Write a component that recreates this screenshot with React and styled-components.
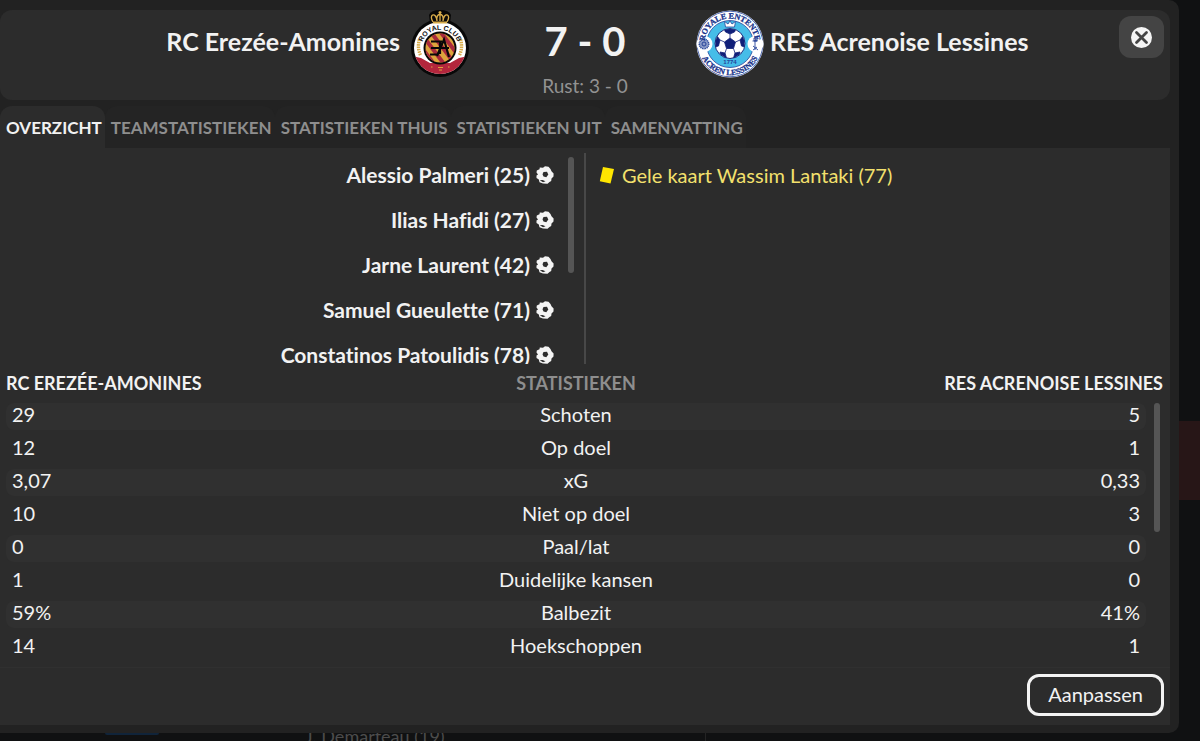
import styled, { createGlobalStyle } from "styled-components";

const goals = [
  "Alessio Palmeri (25)",
  "Ilias Hafidi (27)",
  "Jarne Laurent (42)",
  "Samuel Gueulette (71)",
  "Constatinos Patoulidis (78)",
];

const tabs = ["Overzicht", "Teamstatistieken", "Statistieken thuis", "Statistieken uit", "Samenvatting"];

const stats = [
  ["29", "Schoten", "5"],
  ["12", "Op doel", "1"],
  ["3,07", "xG", "0,33"],
  ["10", "Niet op doel", "3"],
  ["0", "Paal/lat", "0"],
  ["1", "Duidelijke kansen", "0"],
  ["59%", "Balbezit", "41%"],
  ["14", "Hoekschoppen", "1"],
];

const HomeCrest = () => (
  <Crest viewBox="0 0 68 68" aria-hidden="true">
    <defs>
      <path id="home-arc" d="M15.5 42 A18.8 18.8 0 1 1 52.5 42" />
      <clipPath id="home-ring"><circle cx="34" cy="38" r="26" /></clipPath>
      <clipPath id="home-core"><circle cx="34" cy="38" r="14.5" /></clipPath>
    </defs>
    <circle cx="34" cy="38" r="29" fill="#080808" />
    <path d="M24 14 L23 5 Q25 0 34 0 Q43 0 45 5 L44 14 Z" fill="#080808" />
    <g clipPath="url(#home-ring)">
      <rect width="68" height="68" fill="#fff" />
      <path d="M6 46 L15 48 L24 53 H44 L53 48 L62 46 V68 H6 Z" fill="#b3263c" />
    </g>
    <g fill="none" stroke="#d9ad4b" strokeWidth="1.3">
      <path d="M27 12 Q24 7 26.500 5 Q30 4 31 11 M41 12 Q44 7 41.500 5 Q38 4 37 11 M34 11 V3 M31 11 Q30 5 34 4 Q38 5 37 11" />
      <path d="M27 12.500 H41" strokeWidth="2" />
      <path d="M32.500 2.500 H35.500 M34 1 V4" />
      <path d="M14.500 45 Q11 38 13.500 29 M53.500 45 Q57 38 54.500 29" strokeWidth="3.400" strokeDasharray="1.600 .8" />
    </g>
    <circle cx="34" cy="38" r="16.500" fill="#080808" />
    <g clipPath="url(#home-core)">
      <rect x="18" y="22" width="32" height="32" fill="#dda43c" />
      <path d="M17 26 L41 58 M24 21 L49 54 M33 20 L55 49 M13 34 L31 58" stroke="#a92a3c" strokeWidth="4" />
    </g>
    <path d="M25 31.500 H36 M25 38 H43 M24 44.500 H31 M31 46 L38 29.500 L43 47 M34 31 V44" fill="none" stroke="#080808" strokeWidth="2.200" />
    <path d="M32 57.500 h5 M25 57 h1.500 M42 57 h1.500 M33 60 h3" stroke="#dda43c" strokeWidth="1" />
    <CrestText $size={7} fill="#111"><textPath href="#home-arc" startOffset="50%" textAnchor="middle">ROYAL CLUB</textPath></CrestText>
  </Crest>
);

const AwayCrest = () => (
  <Crest viewBox="0 0 68 68" aria-hidden="true">
    <defs>
      <path id="away-top" d="M10.9 44.8 A25.5 25.5 0 1 1 57.1 44.8" />
      <path id="away-bottom" d="M3.500 28.6 A31 31 0 1 0 64.500 28.6" />
      <clipPath id="away-ball"><circle cx="34" cy="33.500" r="14.500" /></clipPath>
    </defs>
    <circle cx="34" cy="34" r="33.500" fill="#fff" />
    <circle cx="34" cy="34" r="32.800" fill="none" stroke="#26449a" strokeWidth=".8" />
    <circle cx="34" cy="34" r="23.500" fill="#46bde8" stroke="#26449a" strokeWidth=".8" />
    <circle cx="8.500" cy="34" r="8" fill="#fff" />
    <circle cx="59.500" cy="34" r="8" fill="#fff" />
    <circle cx="8" cy="34" r="4.800" fill="#8b9bc8" stroke="#26449a" strokeWidth="1.400" strokeDasharray="1 .7" />
    <circle cx="8" cy="34" r="2" fill="none" stroke="#26449a" />
    <path d="M59 30 V40 M56.500 31 H61.500 M58 28 h3 v3 h-3 Z M57 36 l5 4 M57 40 l4 -3" fill="none" stroke="#26449a" strokeWidth=".9" />
    <path d="M29.500 17 L28.500 11.500 L32 14 L34 11 L36 14 L39.500 11.500 L38.500 17 Z" fill="#fff" stroke="#26449a" strokeWidth=".8" />
    <circle cx="34" cy="33.500" r="15" fill="#fff" stroke="#19297d" />
    <g clipPath="url(#away-ball)" fill="#101f79" stroke="#101f79" strokeWidth=".8">
      <path d="M34 28 L39.500 32 L37.500 38.500 H30.500 L28.500 32 Z" />
      <path d="M28 19 H40 L38.500 22 L34 24 L29.500 22 Z M19 29 L21 26 L24 30 L22.500 36 L19 37 Z M49 29 L47 26 L44 30 L45.500 36 L49 37 Z M24 42 L29 43 L30.500 48 L25 48 Z M44 42 L39 43 L37.500 48 L43 48 Z" />
      <path d="M34 24 V28 M28.500 32 L24 30 M39.500 32 L44 30 M30.500 38.500 L29 43 M37.500 38.500 L39 43" fill="none" />
    </g>
    <CrestText $size={6} x="34" y="54" textAnchor="middle" fill="#26449a">1774</CrestText>
    <CrestText $size={8} $serif fill="#19348c" stroke="#19348c" strokeWidth=".3"><textPath href="#away-top" startOffset="50%" textAnchor="middle">ROYALE ENTENTE</textPath></CrestText>
    <CrestText $size={8} $serif fill="#19348c" stroke="#19348c" strokeWidth=".3"><textPath href="#away-bottom" startOffset="50%" textAnchor="middle">ACREN LESSINES</textPath></CrestText>
  </Crest>
);

const Ball = () => (
  <svg width="18" height="18" viewBox="0 0 18 18" aria-hidden="true">
    <path d="M3.500 3.300 L3.800 1.500 L7 1.800 L9 .3 L12.500 .8 L14.500 3 L15.500 5.300 L17.600 7.500 L17.500 10.500 L15.500 12.500 L15.200 15 L13.500 16 L11.500 17.700 L7 17.500 L3.500 16.200 L2.800 13.500 L.5 12 L.5 9.500 L2 8.500 L.5 6.500 L.8 4.500 Z" fill="#f4f4f4" />
    <path d="M7.500 6 L11 5.800 L12.300 8.500 L10.300 11.300 L7.500 10.500 L6.500 8.300 Z" fill="#2c2c2c" />
    <path d="M3.800 14.300 L6.500 13.900 L9.500 15.300 L7 16.200 Z" fill="#2c2c2c" />
  </svg>
);

const App = () => {
  return (
    <Page>
      <GlobalStyle />
      <Main>
        <Dialog role="dialog" aria-label="Wedstrijdoverzicht">
          <Header>
            <Team $home>
              <TeamName>RC Erezée-Amonines</TeamName>
              <HomeCrest />
            </Team>
            <Score>
              <Result>7 - 0</Result>
              <HalfTime>Rust: 3 - 0</HalfTime>
            </Score>
            <Team>
              <AwayCrest />
              <TeamName>RES Acrenoise Lessines</TeamName>
              <CloseButton aria-label="Sluiten">
                <svg width="21" height="21" viewBox="0 0 21 21">
                  <circle cx="10.5" cy="10.5" r="10.5" fill="#f4f4f4" />
                  <path d="M5.500 5.500 L15.500 15.500 M15.500 5.500 L5.500 15.500" stroke="#444" strokeWidth="2.800" strokeLinecap="round" />
                </svg>
              </CloseButton>
            </Team>
          </Header>
          <Tabs role="tablist">
            {tabs.map((tab, i) => (
              <Tab key={tab} role="tab" aria-selected={i === 0} $active={i === 0}>{tab}</Tab>
            ))}
          </Tabs>
          <Panel>
            <Events>
              <HomeEvents>
                <EventList>
                  {goals.map((goal) => (
                    <Goal key={goal}>{goal}<Ball /></Goal>
                  ))}
                </EventList>
                <Scrollbar $height={116} />
              </HomeEvents>
              <AwayEvents>
                <Booking>
                  <svg width="16" height="18" viewBox="0 0 16 18" aria-hidden="true">
                    <path d="M4 1 L15 3 L11.500 17.500 L.8 15.200 Z" fill="#ffe600" />
                  </svg>
                  Gele kaart Wassim Lantaki (77)
                </Booking>
              </AwayEvents>
            </Events>
            <Stats>
              <colgroup>
                <col />
                <col />
                <col />
                <ScrollCol />
              </colgroup>
              <thead>
                <tr>
                  <Heading $align="left">RC Erezée-Amonines</Heading>
                  <Heading $align="center" $muted>Statistieken</Heading>
                  <Heading $align="right" colSpan={2}>RES Acrenoise Lessines</Heading>
                </tr>
              </thead>
              <tbody>
                {stats.map(([home, label, away], i) => (
                  <StatRow key={label}>
                    <Cell $align="left">{home}</Cell>
                    <Cell $align="center">{label}</Cell>
                    <Cell $align="right">{away}</Cell>
                    {i === 0 && <ScrollCell rowSpan={stats.length}><Scrollbar $height={129} /></ScrollCell>}
                  </StatRow>
                ))}
              </tbody>
            </Stats>
            <Footer>
              <AdjustButton>Aanpassen</AdjustButton>
            </Footer>
          </Panel>
        </Dialog>
        <Side><SideRow /></Side>
      </Main>
      <Below>
        <BelowBadge />
        <BelowName>J. Demarteau (19)</BelowName>
        <BelowLine />
      </Below>
    </Page>
  )
}

export default App

const GlobalStyle = createGlobalStyle`
  * {
    box-sizing: border-box;
  }
  body {
    margin: 0;
    background: #101112;
    color: #f2f2f2;
    font-family: Lato, "Liberation Sans", sans-serif;
    font-size: 20px;
    font-variant-ligatures: none;
  }
  button {
    font: inherit;
    color: inherit;
    border: 0;
    padding: 0;
    cursor: pointer;
  }
`

const Page = styled.div`
  min-height: 100vh;
  overflow: hidden;
`

const Main = styled.div`
  display: flex;
`

const Dialog = styled.section`
  flex: 1;
  min-width: 0;
  padding: 10px 9px 8px 0;
  background: #222;
  border-radius: 0 10px 10px 0;
`

const Header = styled.header`
  display: grid;
  grid-template-columns: 1fr 222px 1fr;
  height: 90px;
  background: #2c2c2c;
  border-radius: 12px;
`

const Team = styled.div`
  display: flex;
  align-items: flex-start;
  justify-content: ${({ $home }) => ($home ? "flex-end" : "flex-start")};
  gap: 6px;
`

const Crest = styled.svg`
  width: 68px;
  height: 68px;
  flex: none;
`

const CrestText = styled.text`
  font-family: ${({ $serif }) => ($serif ? '"Liberation Serif", serif' : '"Liberation Sans", sans-serif')};
  font-size: ${({ $size }) => $size}px;
  font-weight: 700;
`

const TeamName = styled.h2`
  margin: 0;
  font-size: 25px;
  font-weight: 700;
  line-height: 62px;
  white-space: nowrap;
`

const Score = styled.div`
  text-align: center;
`

const Result = styled.div`
  font-size: 40px;
  font-weight: 700;
  line-height: 62px;
`

const HalfTime = styled.div`
  color: #929292;
  font-size: 19px;
  line-height: 28px;
`

const CloseButton = styled.button`
  display: flex;
  align-items: center;
  justify-content: center;
  width: 45px;
  height: 42px;
  margin: 6px 6px 0 auto;
  background: #444;
  border-radius: 12px;
`

const Tabs = styled.div`
  display: flex;
  margin-top: 6px;
`

const Tab = styled.button`
  height: 42px;
  padding: 0 3px 0 6px;
  background: ${({ $active }) => ($active ? "#2c2c2c" : "#242424")};
  color: ${({ $active }) => ($active ? "#f2f2f2" : "#8e8e8e")};
  border-radius: 12px 12px 0 0;
  font-size: 17px;
  font-weight: 700;
  text-transform: uppercase;
  white-space: nowrap;
`

const Panel = styled.div`
  background: #2c2c2c;
`

const Events = styled.div`
  display: grid;
  grid-template-columns: calc(50% - 1px) 1fr;
  height: 216px;
  padding-top: 5px;
  overflow: hidden;
`

const HomeEvents = styled.div`
  display: flex;
  justify-content: flex-end;
  gap: 14px;
  padding-right: 10px;
`

const EventList = styled.ul`
  margin: 0;
  padding: 0;
  list-style: none;
`

const Goal = styled.li`
  display: flex;
  align-items: center;
  justify-content: flex-end;
  gap: 6px;
  height: 45px;
  padding-bottom: 2px;
  font-size: 21px;
  font-weight: 700;
  line-height: 24px;
`

const Scrollbar = styled.div`
  width: 6px;
  height: ${({ $height }) => $height}px;
  margin-top: 4px;
  background: #555;
  border-radius: 3px;
`

const AwayEvents = styled.div`
  padding-left: 13px;
  border-left: 2px solid #484848;
`

const Booking = styled.div`
  display: flex;
  align-items: center;
  gap: 7px;
  height: 45px;
  padding-bottom: 2px;
  color: #f3e06d;
`

const Stats = styled.table`
  width: 100%;
  padding: 0 7px 0 6px;
  border-spacing: 0 6px;
  table-layout: fixed;
`

const ScrollCol = styled.col`
  width: 17px;
`

const Heading = styled.th`
  height: 27px;
  padding: 0;
  color: ${({ $muted }) => ($muted ? "#8e8e8e" : "#f2f2f2")};
  font-size: 18px;
  font-weight: 700;
  line-height: 27px;
  text-align: ${({ $align }) => $align};
  text-transform: uppercase;
  white-space: nowrap;
`

const Cell = styled.td`
  height: 27px;
  padding: 0 6px 5px;
  line-height: 22px;
  text-align: ${({ $align }) => $align};

  &:first-child {
    border-radius: 8px 0 0 8px;
  }
  &:nth-child(3) {
    border-radius: 0 8px 8px 0;
  }
`

const StatRow = styled.tr`
  &:nth-child(odd) ${Cell} {
    background: #303030;
  }
`

const ScrollCell = styled.td`
  padding: 0 0 0 8px;
  vertical-align: top;

  ${Scrollbar} {
    margin: 0;
  }
`

const Footer = styled.footer`
  display: flex;
  justify-content: flex-end;
  padding: 6px 6px 9px;
  border-top: 1px solid #303030;
`

const AdjustButton = styled.button`
  height: 42px;
  padding: 0 18px 2px;
  background: #2c2c2c;
  border: 3px solid #f4f4f4;
  border-radius: 12px;
`

const Side = styled.div`
  width: 21px;
  padding-top: 421px;
`

const SideRow = styled.div`
  height: 79px;
  background: #271617;
`

const Below = styled.div`
  display: flex;
  height: 8px;
  padding-left: 105px;
  overflow: hidden;
`

const BelowBadge = styled.div`
  width: 54px;
  height: 2px;
  margin-right: 146px;
  background: #10243a;
  border-radius: 0 0 4px 4px;
`

const BelowName = styled.div`
  width: 400px;
  color: #4c4c4c;
  font-size: 18px;
  line-height: 6px;
`

const BelowLine = styled.div`
  width: 1px;
  background: #242424;
`
